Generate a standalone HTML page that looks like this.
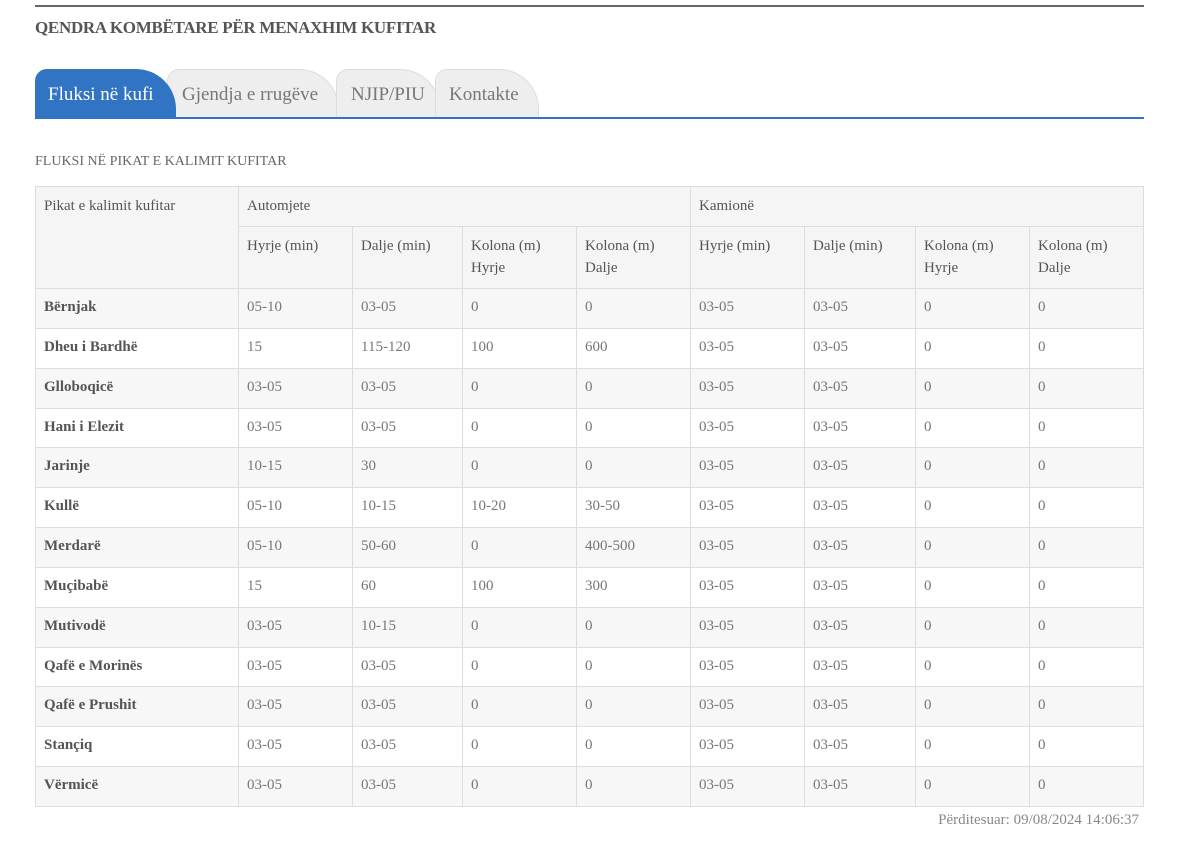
<!DOCTYPE html>
<html><head><meta charset="utf-8"><style>
body{margin:0;background:#fff;font-family:"Liberation Serif",serif;color:#555;}
.wrap{position:absolute;left:35px;top:0;width:1109px;}
.topline{position:absolute;top:5px;left:0;width:1109px;height:2px;background:#666;}
h1{position:absolute;top:18px;left:0;margin:0;font-size:17px;font-weight:bold;color:#555;letter-spacing:-0.3px;}
.tabs{position:absolute;top:69px;left:0;height:49px;}
.tab{position:absolute;top:0;height:49px;background:#eee;border:1px solid #ddd;border-bottom:none;border-radius:12px 40px 0 0;box-sizing:border-box;font-size:19px;color:#777;padding:14px 0 0 12px;}
.tab.a{background:#3274c4;color:#fff;border-color:#3274c4;z-index:5}
.bline{position:absolute;top:117px;left:0;width:1109px;height:2px;background:#3274c4;}
.cap{position:absolute;top:154px;left:0;font-size:14px;color:#666;}
table{position:absolute;top:186px;left:0;border-collapse:collapse;width:1108px;font-size:15px;table-layout:fixed;}
td,th{border:1px solid #ddd;padding:0 8px;text-align:left;vertical-align:top;font-weight:normal;box-sizing:border-box;}
th{background:#f5f5f5;color:#555;line-height:22px;padding-top:8px;}
tr.h1 th{height:40px;}
tr.h2 th{height:62px;}
td{height:39.85px;padding-top:10px;color:#777;}
td:first-child{color:#555;font-weight:bold;}
tbody tr:nth-child(odd) td{background:#f7f7f7;}
.upd{position:absolute;top:812px;right:5px;font-size:15px;color:#888;}
</style></head><body><div class="wrap">
<div class="topline"></div>
<h1>QENDRA KOMBËTARE PËR MENAXHIM KUFITAR</h1>
<div class="tabs">
<div class="tab a" style="left:0;width:141px">Fluksi në kufi</div>
<div class="tab" style="left:132px;width:172px;padding-left:14px">Gjendja e rrugëve</div>
<div class="tab" style="left:301px;width:104px;padding-left:14px">NJIP/PIU</div>
<div class="tab" style="left:400px;width:104px;padding-left:13px">Kontakte</div>
</div>
<div class="bline"></div>
<div class="cap">FLUKSI NË PIKAT E KALIMIT KUFITAR</div>
<table>
<colgroup><col style="width:203px"><col style="width:114px"><col style="width:110px"><col style="width:114px"><col style="width:114px"><col style="width:114px"><col style="width:111px"><col style="width:114px"><col style="width:114px"></colgroup>
<thead>
<tr class="h1"><th rowspan="2">Pikat e kalimit kufitar</th><th colspan="4">Automjete</th><th colspan="4">Kamionë</th></tr>
<tr class="h2"><th>Hyrje (min)</th><th>Dalje (min)</th><th>Kolona (m)<br>Hyrje</th><th>Kolona (m)<br>Dalje</th><th>Hyrje (min)</th><th>Dalje (min)</th><th>Kolona (m)<br>Hyrje</th><th>Kolona (m)<br>Dalje</th></tr>
</thead>
<tbody>
<tr><td>Bërnjak</td><td>05-10</td><td>03-05</td><td>0</td><td>0</td><td>03-05</td><td>03-05</td><td>0</td><td>0</td></tr>
<tr><td>Dheu i Bardhë</td><td>15</td><td>115-120</td><td>100</td><td>600</td><td>03-05</td><td>03-05</td><td>0</td><td>0</td></tr>
<tr><td>Glloboqicë</td><td>03-05</td><td>03-05</td><td>0</td><td>0</td><td>03-05</td><td>03-05</td><td>0</td><td>0</td></tr>
<tr><td>Hani i Elezit</td><td>03-05</td><td>03-05</td><td>0</td><td>0</td><td>03-05</td><td>03-05</td><td>0</td><td>0</td></tr>
<tr><td>Jarinje</td><td>10-15</td><td>30</td><td>0</td><td>0</td><td>03-05</td><td>03-05</td><td>0</td><td>0</td></tr>
<tr><td>Kullë</td><td>05-10</td><td>10-15</td><td>10-20</td><td>30-50</td><td>03-05</td><td>03-05</td><td>0</td><td>0</td></tr>
<tr><td>Merdarë</td><td>05-10</td><td>50-60</td><td>0</td><td>400-500</td><td>03-05</td><td>03-05</td><td>0</td><td>0</td></tr>
<tr><td>Muçibabë</td><td>15</td><td>60</td><td>100</td><td>300</td><td>03-05</td><td>03-05</td><td>0</td><td>0</td></tr>
<tr><td>Mutivodë</td><td>03-05</td><td>10-15</td><td>0</td><td>0</td><td>03-05</td><td>03-05</td><td>0</td><td>0</td></tr>
<tr><td>Qafë e Morinës</td><td>03-05</td><td>03-05</td><td>0</td><td>0</td><td>03-05</td><td>03-05</td><td>0</td><td>0</td></tr>
<tr><td>Qafë e Prushit</td><td>03-05</td><td>03-05</td><td>0</td><td>0</td><td>03-05</td><td>03-05</td><td>0</td><td>0</td></tr>
<tr><td>Stançiq</td><td>03-05</td><td>03-05</td><td>0</td><td>0</td><td>03-05</td><td>03-05</td><td>0</td><td>0</td></tr>
<tr><td>Vërmicë</td><td>03-05</td><td>03-05</td><td>0</td><td>0</td><td>03-05</td><td>03-05</td><td>0</td><td>0</td></tr>
</tbody></table>
<div class="upd">Përditesuar: 09/08/2024 14:06:37</div>
</div></body></html>
